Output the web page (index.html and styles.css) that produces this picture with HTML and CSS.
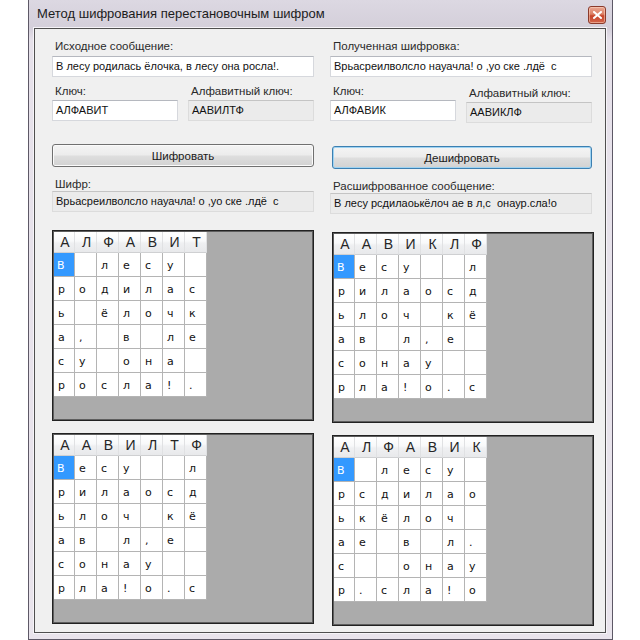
FILE: index.html
```html
<!DOCTYPE html>
<html lang="ru">
<head>
<meta charset="utf-8">
<title>Метод шифрования перестановочным шифром</title>
<link rel="stylesheet" href="styles.css">
</head>
<body>
<div class="window">
  <div class="titlebar">
    <span class="title">Метод шифрования перестановочным шифром</span>
    <span class="close"><svg width="9" height="8" viewBox="0 0 9 8"><path d="M1 1 L8 7 M8 1 L1 7" stroke="#fff" stroke-width="2" stroke-linecap="square"/></svg></span>
  </div>
  <div class="client">
    <div class="cols">
      <section class="col">
        <div class="label">Исходное сообщение:</div>
        <div class="tb">В лесу родилась ёлочка, в лесу она росла!.</div>
        <div class="keyrow">
          <div class="keyfield"><div class="label">Ключ:</div><div class="tb">АЛФАВИТ</div></div>
          <div class="keyfield"><div class="label">Алфавитный ключ:</div><div class="tb ro">ААВИЛТФ</div></div>
        </div>
        <button class="btn">Шифровать</button>
        <div class="label lbl-out">Шифр:</div>
        <div class="tb ro">Врьасреилволсло науачла! о ,уо ске .лдё  с</div>
        <div class="dgv">
          <div class="table">
            <span class="h">А</span><span class="h">Л</span><span class="h">Ф</span><span class="h">А</span><span class="h">В</span><span class="h">И</span><span class="h">Т</span>
            <span class="c sel">В</span><span class="c"></span><span class="c">л</span><span class="c">е</span><span class="c">с</span><span class="c">у</span><span class="c"></span>
            <span class="c">р</span><span class="c">о</span><span class="c">д</span><span class="c">и</span><span class="c">л</span><span class="c">а</span><span class="c">с</span>
            <span class="c">ь</span><span class="c"></span><span class="c">ё</span><span class="c">л</span><span class="c">о</span><span class="c">ч</span><span class="c">к</span>
            <span class="c">а</span><span class="c">,</span><span class="c"></span><span class="c">в</span><span class="c"></span><span class="c">л</span><span class="c">е</span>
            <span class="c">с</span><span class="c">у</span><span class="c"></span><span class="c">о</span><span class="c">н</span><span class="c">а</span><span class="c"></span>
            <span class="c">р</span><span class="c">о</span><span class="c">с</span><span class="c">л</span><span class="c">а</span><span class="c">!</span><span class="c">.</span>
          </div>
        </div>
        <div class="dgv lower">
          <div class="table">
            <span class="h">А</span><span class="h">А</span><span class="h">В</span><span class="h">И</span><span class="h">Л</span><span class="h">Т</span><span class="h">Ф</span>
            <span class="c sel">В</span><span class="c">е</span><span class="c">с</span><span class="c">у</span><span class="c"></span><span class="c"></span><span class="c">л</span>
            <span class="c">р</span><span class="c">и</span><span class="c">л</span><span class="c">а</span><span class="c">о</span><span class="c">с</span><span class="c">д</span>
            <span class="c">ь</span><span class="c">л</span><span class="c">о</span><span class="c">ч</span><span class="c"></span><span class="c">к</span><span class="c">ё</span>
            <span class="c">а</span><span class="c">в</span><span class="c"></span><span class="c">л</span><span class="c">,</span><span class="c">е</span><span class="c"></span>
            <span class="c">с</span><span class="c">о</span><span class="c">н</span><span class="c">а</span><span class="c">у</span><span class="c"></span><span class="c"></span>
            <span class="c">р</span><span class="c">л</span><span class="c">а</span><span class="c">!</span><span class="c">о</span><span class="c">.</span><span class="c">с</span>
          </div>
        </div>
      </section>
      <section class="col right">
        <div class="label">Полученная шифровка:</div>
        <div class="tb">Врьасреилволсло науачла! о ,уо ске .лдё  с</div>
        <div class="keyrow">
          <div class="keyfield"><div class="label">Ключ:</div><div class="tb">АЛФАВИК</div></div>
          <div class="keyfield"><div class="label">Алфавитный ключ:</div><div class="tb ro">ААВИКЛФ</div></div>
        </div>
        <button class="btn focus">Дешифровать</button>
        <div class="label lbl-out">Расшифрованное сообщение:</div>
        <div class="tb ro">В лесу рсдилаоькёлоч ае в л,с  онаур.сла!о</div>
        <div class="dgv">
          <div class="table">
            <span class="h">А</span><span class="h">А</span><span class="h">В</span><span class="h">И</span><span class="h">К</span><span class="h">Л</span><span class="h">Ф</span>
            <span class="c sel">В</span><span class="c">е</span><span class="c">с</span><span class="c">у</span><span class="c"></span><span class="c"></span><span class="c">л</span>
            <span class="c">р</span><span class="c">и</span><span class="c">л</span><span class="c">а</span><span class="c">о</span><span class="c">с</span><span class="c">д</span>
            <span class="c">ь</span><span class="c">л</span><span class="c">о</span><span class="c">ч</span><span class="c"></span><span class="c">к</span><span class="c">ё</span>
            <span class="c">а</span><span class="c">в</span><span class="c"></span><span class="c">л</span><span class="c">,</span><span class="c">е</span><span class="c"></span>
            <span class="c">с</span><span class="c">о</span><span class="c">н</span><span class="c">а</span><span class="c">у</span><span class="c"></span><span class="c"></span>
            <span class="c">р</span><span class="c">л</span><span class="c">а</span><span class="c">!</span><span class="c">о</span><span class="c">.</span><span class="c">с</span>
          </div>
        </div>
        <div class="dgv lower">
          <div class="table">
            <span class="h">А</span><span class="h">Л</span><span class="h">Ф</span><span class="h">А</span><span class="h">В</span><span class="h">И</span><span class="h">К</span>
            <span class="c sel">В</span><span class="c"></span><span class="c">л</span><span class="c">е</span><span class="c">с</span><span class="c">у</span><span class="c"></span>
            <span class="c">р</span><span class="c">с</span><span class="c">д</span><span class="c">и</span><span class="c">л</span><span class="c">а</span><span class="c">о</span>
            <span class="c">ь</span><span class="c">к</span><span class="c">ё</span><span class="c">л</span><span class="c">о</span><span class="c">ч</span><span class="c"></span>
            <span class="c">а</span><span class="c">е</span><span class="c"></span><span class="c">в</span><span class="c"></span><span class="c">л</span><span class="c">.</span>
            <span class="c">с</span><span class="c"></span><span class="c"></span><span class="c">о</span><span class="c">н</span><span class="c">а</span><span class="c">у</span>
            <span class="c">р</span><span class="c">.</span><span class="c">с</span><span class="c">л</span><span class="c">а</span><span class="c">!</span><span class="c">о</span>
          </div>
        </div>
      </section>
    </div>
  </div>
</div>
</body>
</html>
```
FILE: styles.css
```css
* { box-sizing: border-box; }
html, body { margin: 0; padding: 0; }
body {
  background: #ffffff;
  font-family: "Liberation Sans", Arial, sans-serif;
  width: 640px;
  height: 640px;
  overflow: hidden;
}
.window {
  margin-left: 28px;
  width: 585px;
  height: 640px;
  border: 1px solid #5d5866;
  border-top: none;
  background: linear-gradient(to bottom, #dcd8e2 0px, #d4cfda 28px, #e6e1ea 40px, #e9e4ec 100%);
  padding: 0 6px 6px 5px;
  display: flex;
  flex-direction: column;
}
.titlebar {
  height: 28px;
  flex: none;
  display: flex;
  justify-content: space-between;
  align-items: flex-start;
  padding-left: 3px;
}
.title {
  font-size: 13px;
  line-height: 16px;
  margin-top: 6px;
  color: #1c1c1c;
  white-space: nowrap;
}
.close {
  width: 18px;
  height: 18px;
  margin-top: 6px;
  border: 1px solid #8a3a2c;
  border-radius: 3px;
  background: linear-gradient(to bottom, #e9a793 0%, #dc7f64 45%, #c8452b 55%, #d2664c 100%);
  display: flex;
  align-items: center;
  justify-content: center;
  box-shadow: inset 0 0 0 1px rgba(255, 220, 200, 0.5);
}
.client {
  flex: 1;
  border: 1px solid #4f4f4f;
  background: #f0f0f0;
  padding: 11px 0 0 17px;
  box-shadow: 0 0 0 1px #f6f4f8;
}
.cols {
  display: grid;
  grid-template-columns: 262px 262px;
  column-gap: 16px;
}
.col {
  display: flex;
  flex-direction: column;
}
.label {
  font-size: 11.5px;
  line-height: 13px;
  height: 13px;
  color: #2a2a2a;
  padding-left: 3px;
  white-space: nowrap;
}
.tb {
  height: 21px;
  margin-top: 3px;
  border: 1px solid #d6d8dd;
  border-top-color: #b5b8bf;
  background: #ffffff;
  font-size: 11px;
  line-height: 19px;
  padding-left: 3px;
  color: #111;
  white-space: pre;
  overflow: hidden;
}
.tb.ro {
  background: #ebebeb;
  border-color: #dcdcdc;
  border-top-color: #c4c4c4;
}
.keyrow {
  display: grid;
  grid-template-columns: 126px 126px;
  column-gap: 10px;
  margin-top: 8px;
}
.keyfield .tb { margin-top: 2px; }
.right .keyfield + .keyfield .label { margin-top: 2px; }
.btn {
  margin-top: 23px;
  height: 23px;
  width: 262px;
  border: 1px solid #707070;
  border-radius: 3px;
  background: linear-gradient(to bottom, #f4f4f4 0%, #ececec 48%, #dedede 52%, #d2d2d2 100%);
  box-shadow: inset 0 0 0 1px #fbfbfb;
  font-family: "Liberation Sans", Arial, sans-serif;
  font-size: 11.5px;
  color: #1a1a1a;
  padding: 0;
}
.right .btn {
  margin-left: 2px;
  width: 260px;
}
.btn.focus {
  border-color: #3c7fb1;
  box-shadow: inset 0 0 0 1px #9ed3f2;
}
.lbl-out { margin-top: 11px; }
.lbl-out + .tb { margin-top: 0; }
.dgv {
  margin-top: 18px;
  width: 262px;
  height: 191px;
  border: 1px solid #222;
  box-shadow: inset 0 0 0 1px #5e5e5e;
  background: #ababab;
  padding: 1px;
}
.right .dgv {
  margin-left: 2px;
}
.dgv.lower { margin-top: 12px; }
.table {
  display: grid;
  grid-template-columns: 21px repeat(6, 22px);
  grid-template-rows: 21px repeat(6, 24px);
  width: max-content;
}
.h {
  background: linear-gradient(to bottom, #ffffff 0%, #f8f9fa 45%, #eff0f2 55%, #e8e9eb 100%);
  border-right: 1px solid #e0e1e3;
  border-bottom: 1px solid #cfd0d2;
  font-size: 14px;
  line-height: 20px;
  color: #262626;
  text-align: center;
  padding-left: 2px;
}
.c {
  background: #ffffff;
  border-right: 1px solid #b4b4b4;
  border-bottom: 1px solid #b4b4b4;
  font-family: "DejaVu Sans", Verdana, sans-serif;
  font-size: 11px;
  line-height: 23px;
  padding: 1px 0 0 4px;
  color: #111;
}
.c.sel {
  background: #3399ff;
  color: #ffffff;
  padding-left: 3px;
}
```
